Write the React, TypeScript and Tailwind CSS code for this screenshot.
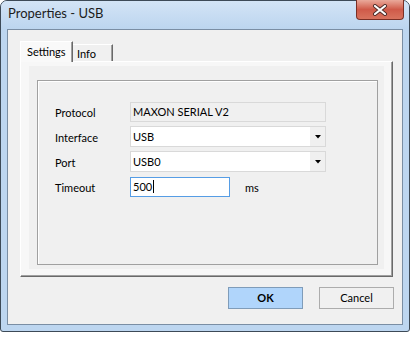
import React from "react";

function Row({ label, children }: { label: string; children: React.ReactNode }) {
  return (
    <div className="flex items-center h-[21px]">
      <div className="w-[75px] leading-[21px] pt-[2px]">{label}</div>
      {children}
    </div>
  );
}

function Combo({ value }: { value: string }) {
  return (
    <div className="w-[196px] h-[21px] border border-[#d9d9d9] bg-white flex items-center">
      <div className="flex-1 pl-[2px] leading-[19px]">{value}</div>
      <div className="w-[15px] h-[19px] bg-[#f0f0f0] flex items-center justify-center">
        <svg width="6" height="4" viewBox="0 0 6 4">
          <path d="M0 0 H6 L3 3.5 Z" fill="#000" />
        </svg>
      </div>
    </div>
  );
}

export default function App() {
  return (
    <div className="w-[415px] h-[337px] bg-white font-['Lato',sans-serif] text-[11px] text-black">
      <div className="w-[410px] h-[332px] rounded-t-[7px] rounded-b-[3px] border border-[#3d4a57] bg-[#bdd6f0] flex flex-col">
        {/* Title bar */}
        <div className="relative h-[28px] rounded-t-[6px] bg-gradient-to-b from-[#d3e4f6] to-[#bcd5ef] flex items-center pl-[7px]">
          <span className="text-[13px] leading-none text-[#1c1c1c] -mt-[3px]">Properties - USB</span>
          <div className="absolute right-[5px] -top-px w-[48px] h-[20px] rounded-b-[4px] border border-[#7a2f25] border-t-0 bg-gradient-to-b from-[#e9a99b] via-[#cf5a49] to-[#d8735e] flex items-center justify-center">
            <svg width="16" height="12" viewBox="0 0 16 12">
              <path d="M3 2 L13 10 M13 2 L3 10" stroke="#4a2a26" strokeWidth="4" strokeLinecap="round" />
              <path d="M3 2 L13 10 M13 2 L3 10" stroke="#ffffff" strokeWidth="2.2" strokeLinecap="round" />
            </svg>
          </div>
        </div>
        {/* Client */}
        <div className="mx-[6px] mb-[6px] flex-1 border border-[#7a8ea4] bg-[#f0f0f0] flex flex-col">
          <div className="ml-[12px] mt-[11px] w-[373px]">
            {/* Tabs */}
            <div className="flex items-end h-[20px]">
              <div className="relative z-10 -mb-px h-[21px] w-[53px] bg-[#f9f9f9] border-l border-t border-white border-r border-r-[#696969] shadow-[inset_-1px_0_0_#a0a0a0] pl-[6px] leading-[20px] text-[11px]">
                Settings
              </div>
              <div className="h-[17px] w-[40px] bg-[#f0f0f0] border-t border-white border-r border-r-[#696969] shadow-[inset_-1px_0_0_#a0a0a0] pl-[4px] leading-[18px]">
                Info
              </div>
            </div>
            {/* Panel */}
            <div className="h-[216px] bg-[#f7f7f7] border-t border-l border-white border-r border-b border-r-[#696969] border-b-[#696969] shadow-[inset_-1px_-1px_0_#a0a0a0] pl-[8px] pr-[8px] pb-[7px] pt-[4px] flex">
              <div className="flex-1 bg-[#f0f0f0] pt-[14px] pl-[8px] pr-[6px] pb-[4px] flex">
                <div className="flex-1 border border-[#a0a0a0] shadow-[inset_1px_1px_0_#ffffff] pl-[17px] pt-[20px] flex flex-col gap-[4px]">
                  <Row label="Protocol">
                    <div className="w-[196px] h-[20px] border border-[#d9d9d9] bg-[#f0f0f0] pl-[2px] leading-[18px]">
                      MAXON SERIAL V2
                    </div>
                  </Row>
                  <Row label="Interface">
                    <Combo value="USB" />
                  </Row>
                  <Row label="Port">
                    <Combo value="USB0" />
                  </Row>
                  <Row label="Timeout">
                    <div className="w-[100px] h-[20px] border border-[#569de5] bg-white pl-[2px] leading-[18px] flex items-center">
                      <span>500</span>
                      <span className="w-px h-[13px] bg-black ml-px" />
                    </div>
                    <span className="ml-[15px] pt-[3px]">ms</span>
                  </Row>
                </div>
              </div>
            </div>
          </div>
          {/* Buttons */}
          <div className="flex justify-end gap-[16px] mt-[10px] pr-[8px]">
            <div className="w-[75px] h-[22px] bg-[#b0d5fb] border border-[#7f9cb9] flex items-center justify-center font-bold">
              OK
            </div>
            <div className="w-[75px] h-[22px] bg-[#f0f0f0] border border-[#acacac] flex items-center justify-center">
              Cancel
            </div>
          </div>
        </div>
      </div>
    </div>
  );
}
